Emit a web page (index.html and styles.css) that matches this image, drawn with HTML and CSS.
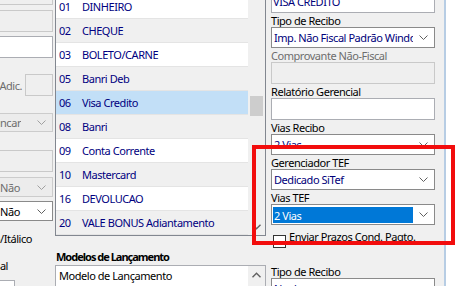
FILE: index.html
```html
<!DOCTYPE html>
<html lang="pt-BR">
<head>
<meta charset="utf-8">
<title>Formas de Pagamento</title>
<link rel="stylesheet" href="styles.css">
</head>
<body>
<div class="form">
  <div class="col-left">
    <div class="tb dis b1"></div>
    <div class="tb dis b2"></div>
    <div class="tb b3"></div>
    <div class="adic"><span>Desc. Adic.</span><div class="tb dis small"></div></div>
    <div class="cb dis l-trunc"><span class="t">Truncar</span><svg class="chev" width="9" height="5" viewBox="0 0 9 5"><path d="M0.5 0.5 L4.5 4.5 L8.5 0.5"/></svg></div>
    <div class="tb dis b4"></div>
    <div class="cb dis l-nao1"><span class="t">Não</span><svg class="chev" width="9" height="5" viewBox="0 0 9 5"><path d="M0.5 0.5 L4.5 4.5 L8.5 0.5"/></svg></div>
    <div class="cb l-nao2"><span class="t">Não</span><svg class="chev" width="9" height="5" viewBox="0 0 9 5"><path d="M0.5 0.5 L4.5 4.5 L8.5 0.5"/></svg></div>
    <div class="ltext italico">Negrito/Itálico</div>
    <div class="ltext normal">Normal</div>
    <div class="tb b5"></div>
  </div>

  <div class="col-mid">
    <div class="list">
      <div class="rows">
        <div class="item"><span class="num">01</span><span>DINHEIRO</span></div>
        <div class="item"><span class="num">02</span><span>CHEQUE</span></div>
        <div class="item"><span class="num">03</span><span>BOLETO/CARNE</span></div>
        <div class="item"><span class="num">05</span><span>Banri Deb</span></div>
        <div class="item sel"><span class="num">06</span><span>Visa Credito</span></div>
        <div class="item"><span class="num">08</span><span>Banri</span></div>
        <div class="item"><span class="num">09</span><span>Conta Corrente</span></div>
        <div class="item"><span class="num">10</span><span>Mastercard</span></div>
        <div class="item"><span class="num">16</span><span>DEVOLUCAO</span></div>
        <div class="item"><span class="num">20</span><span>VALE BONUS Adiantamento</span></div>
      </div>
      <div class="vscroll">
        <div class="thumb"></div>
        <div class="sarrow"><svg width="9" height="6" viewBox="0 0 9 6"><path d="M0.5 0.8 L4.5 4.8 L8.5 0.8"/></svg></div>
      </div>
    </div>
    <div class="sect-title">Modelos de Lançamento</div>
    <div class="memo">
      <div class="memo-text">Modelo de Lançamento</div>
      <div class="vscroll small-scroll">
        <div class="sarrow up"><svg width="9" height="6" viewBox="0 0 9 6"><path d="M0.5 5.2 L4.5 1.2 L8.5 5.2"/></svg></div>
      </div>
    </div>
  </div>

  <div class="col-right">
    <div class="tb white blue-text">VISA CREDITO</div>
    <div class="lbl">Tipo de Recibo</div>
    <div class="cb r"><span class="t">Imp. Não Fiscal Padrão Windows</span><svg class="chev" width="9" height="5" viewBox="0 0 9 5"><path d="M0.5 0.5 L4.5 4.5 L8.5 0.5"/></svg></div>
    <div class="lbl disabled">Comprovante Não-Fiscal</div>
    <div class="tb dis"></div>
    <div class="lbl">Relatório Gerencial</div>
    <div class="tb white"></div>
    <div class="lbl">Vias Recibo</div>
    <div class="cb r"><span class="t">2 Vias</span><svg class="chev" width="9" height="5" viewBox="0 0 9 5"><path d="M0.5 0.5 L4.5 4.5 L8.5 0.5"/></svg></div>
    <div class="lbl">Gerenciador TEF</div>
    <div class="cb r"><span class="t">Dedicado SiTef</span><svg class="chev" width="9" height="5" viewBox="0 0 9 5"><path d="M0.5 0.5 L4.5 4.5 L8.5 0.5"/></svg></div>
    <div class="lbl">Vias TEF</div>
    <div class="cb r"><span class="t selected">2 Vias</span><svg class="chev" width="9" height="5" viewBox="0 0 9 5"><path d="M0.5 0.5 L4.5 4.5 L8.5 0.5"/></svg></div>
    <label class="check"><span class="box"></span><span>Enviar Prazos Cond. Pagto.</span></label>
    <div class="lbl second">Tipo de Recibo</div>
    <div class="cb r"><span class="t">Nenhum</span><svg class="chev" width="9" height="5" viewBox="0 0 9 5"><path d="M0.5 0.5 L4.5 4.5 L8.5 0.5"/></svg></div>
  </div>
</div>
<div class="highlight"></div>
</body>
</html>
```

FILE: styles.css
```css
* { box-sizing: border-box; }
html, body { margin: 0; padding: 0; }
body {
  width: 476px;
  height: 286px;
  overflow: hidden;
  background: #ffffff;
  position: relative;
  font-family: "Noto Sans", "Open Sans", sans-serif;
  font-size: 11px;
  letter-spacing: -0.45px;
  color: #000;
}
.form {
  display: flex;
  align-items: flex-start;
  width: 553px;
  height: 320px;
  margin: -20px 0 0 -107px;
  background: #f0f0f0;
  border-right: 2px solid #b7cde4;
}

/* generic controls */
.tb {
  height: 22px;
  border: 1px solid #abadb3;
  background: #fff;
}
.tb.dis {
  background: #efefef;
  border-color: #c9c9c9;
}
.cb {
  display: flex;
  align-items: center;
  height: 21px;
  border: 1px solid #8a8a8a;
  background: #fff;
  padding: 1px;
}
.cb .t {
  flex: 1;
  white-space: nowrap;
  overflow: hidden;
  padding-left: 1px;
  line-height: 17px;
  color: #00007a;
}
.cb .chev {
  flex: none;
  margin: 0 5px 0 6px;
  fill: none;
  stroke: #606060;
  stroke-width: 1;
}
.cb.dis {
  background: #ececec;
  border-color: #cccccc;
}
.cb.dis .t { color: #6d6d6d; }
.cb.dis .chev { stroke: #a0a0a0; }

/* left column (cropped) */
.col-left {
  width: 160px;
  flex: none;
  display: flex;
  flex-direction: column;
  padding-top: 3px;
}
.b2 { margin-top: 5px; }
.b3 { margin-top: 4px; }
.adic {
  display: flex;
  justify-content: flex-end;
  align-items: center;
  gap: 3px;
  margin-top: 16px;
  height: 22px;
  color: #6d6d6d;
  white-space: nowrap;
}
.tb.small { width: 28px; }
.l-trunc {
  margin-top: 17px;
  margin-left: 87px;
  height: 19px;
  justify-content: flex-end;
}
.l-trunc .t { flex: none; margin-right: 10px; }
.b4 { margin-top: 18px; }
.l-nao1 { margin-top: 5px; height: 20px; margin-left: 104px; }
.l-nao2 { margin-top: 4px; height: 20px; margin-left: 104px; }
.l-nao2 .t { color: #000; }
.ltext {
  line-height: 16px;
  white-space: nowrap;
  text-align: right;
}
.italico { margin-top: 10px; padding-right: 21px; }
.normal { margin-top: 11px; padding-right: 45px; }
.b5 { margin-top: 6px; margin-right: 38px; }

/* middle column */
.col-mid {
  width: 213px;
  flex: none;
  padding-left: 2px;
}
.list {
  display: flex;
  margin-top: 14px;
  width: 211px;
  border: 1px solid #828790;
  background: #fff;
}
.rows { width: 192px; }
.item {
  display: flex;
  height: 24px;
  line-height: 23px;
  border-bottom: 1px solid #e4e4e4;
  padding-left: 3px;
  color: #000080;
  white-space: nowrap;
}
.item:nth-child(even) { background: #f0f0f0; }
.item.sel { background: #c2dff7; }
.num { width: 23px; flex: none; }
.vscroll {
  width: 17px;
  flex: none;
  background: #f0f0f0;
  display: flex;
  flex-direction: column;
  padding-top: 101px;
}
.thumb {
  height: 20px;
  margin: 0 2px;
  background: #cdcdcd;
}
.sarrow {
  margin-top: auto;
  height: 17px;
  display: flex;
  align-items: center;
  justify-content: center;
}
.sarrow svg { fill: none; stroke: #606060; stroke-width: 1.4; }
.sect-title {
  margin-top: 14px;
  line-height: 14px;
  font-weight: bold;
  letter-spacing: -1px;
  padding-left: 1px;
}
.memo {
  display: flex;
  margin-top: 1px;
  width: 211px;
  height: 40px;
  border: 1px solid #abadb3;
  background: #fff;
}
.memo-text {
  flex: 1;
  padding: 2px 3px;
  line-height: 16px;
  white-space: nowrap;
}
.small-scroll { padding-top: 0; }
.sarrow.up { margin-top: 0; }

/* right column */
.col-right {
  width: 178px;
  flex: none;
  padding: 11px 0 0 5px;
  display: flex;
  flex-direction: column;
}
.col-right .tb, .col-right .cb { width: 164px; margin-bottom: 1px; }
.blue-text {
  color: #00007a;
  padding-left: 1px;
  line-height: 20px;
  white-space: nowrap;
}
.lbl {
  line-height: 13px;
  height: 13px;
  white-space: nowrap;
  margin-bottom: 1px;
}
.lbl + .cb, .lbl + .tb { margin-top: -1px; }
.lbl.disabled { color: #6d6d6d; }
.cb .t.selected {
  background: #0078d7;
  color: #fff;
  align-self: stretch;
  line-height: 17px;
  margin-top: 1px;
}
.check {
  display: flex;
  align-items: flex-start;
  gap: 3px;
  margin-top: 3px;
  height: 16px;
  line-height: 16px;
  padding-left: 2px;
  white-space: nowrap;
}
.check .box {
  width: 13px;
  height: 13px;
  margin-top: 6px;
  border: 1px solid #333;
  background: #fff;
  flex: none;
}
.lbl.second { margin-top: 20px; }

/* annotation overlay */
.highlight {
  position: absolute;
  left: 252px;
  top: 145px;
  width: 203px;
  height: 100px;
  border: 4px solid #f20d0d;
}
```
